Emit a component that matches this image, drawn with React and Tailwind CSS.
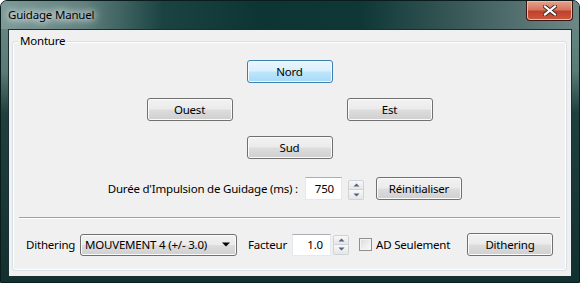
import React from 'react'

const btnBase =
  'h-[23px] w-[86px] flex items-center justify-center rounded-[3px] border text-black leading-none'
const btnNormal =
  'border-[#707070] bg-[linear-gradient(#f2f2f2_0%,#ebebeb_48%,#dddddd_52%,#cfcfcf_100%)] shadow-[inset_0_0_0_1px_#fbfbfb]'
const btnHot =
  'border-[#3c7fb1] bg-[linear-gradient(#eaf6fd_0%,#d9f0fc_48%,#bee6fd_52%,#a7d9f5_100%)] shadow-[inset_0_0_0_1px_#f4fbff]'

const Button = ({ label, hot, className = '' }) => (
  <div className={`${btnBase} ${hot ? btnHot : btnNormal} ${className}`}>{label}</div>
)

const Arrow = ({ up }) => (
  <svg width="7" height="4" viewBox="0 0 7 4">
    <path d={up ? 'M0.5 3.5 L3.5 0.5 L6.5 3.5 Z' : 'M0.5 0.5 L3.5 3.5 L6.5 0.5 Z'} fill="#4d6185" />
  </svg>
)

const Spinner = ({ className = '' }) => (
  <div className={`flex flex-col w-[16px] ${className}`}>
    <div className="h-[10px] flex items-center justify-center border border-[#cfd3d8] rounded-t-[2px] bg-[linear-gradient(#f8f8f8,#e6e6e6)]">
      <Arrow up />
    </div>
    <div className="h-[10px] flex items-center justify-center border border-t-0 border-[#cfd3d8] rounded-b-[2px] bg-[linear-gradient(#f8f8f8,#e6e6e6)]">
      <Arrow />
    </div>
  </div>
)

const NumInput = ({ value, className = '' }) => (
  <div
    className={`bg-white border border-[#e3e9ef] border-t-[#abadb3] flex items-center justify-end ${className}`}
  >
    {value}
  </div>
)

export default function App() {
  return (
    <div className="w-[580px] h-[283px] flex flex-col rounded-t-[7px] border border-[#0b1c1c] overflow-hidden font-['Noto_Sans',sans-serif] text-[11.5px] tracking-[-0.2px] text-black bg-[linear-gradient(180deg,#6c8b89_0%,#5a7a78_25%,#1f3f3e_40%,#123030_100%)]">
      {/* Title bar */}
      <div className="h-[28px] flex items-start justify-between bg-[linear-gradient(90deg,#7b9a98_0%,#62827f_14%,#1a4342_28%,#0c3534_45%,#0e3736_62%,#3b5b5a_80%,#6e8887_100%)]">
        <div className="pl-[7px] pt-[8px] leading-none [text-shadow:0_0_6px_#fff,0_0_10px_#fff,0_0_16px_#ffffffaa]">
          Guidage Manuel
        </div>
        <div className="mr-[6px] w-[47px] h-[20px] rounded-b-[4px] border border-t-0 border-[#3a1712] flex items-center justify-center bg-[linear-gradient(#e6a38f_0%,#d5765f_45%,#c0402b_55%,#cb5a40_100%)] shadow-[inset_0_0_0_1px_#f0b8a8]">
          <svg width="14" height="11" viewBox="0 0 14 11">
            <path d="M2 1.5 L12 9.5 M12 1.5 L2 9.5" stroke="#3a2a2a" strokeWidth="4" strokeLinecap="square" />
            <path d="M2 1.5 L12 9.5 M12 1.5 L2 9.5" stroke="#ffffff" strokeWidth="2.2" strokeLinecap="square" />
          </svg>
        </div>
      </div>

      {/* Client */}
      <div className="mx-[7px] mb-[5px] h-[248px] border border-[#1a3030] bg-[#f0f0f0] flex flex-col">
        <div className="mt-[11px] ml-[3px] mr-[4px] mb-[5px] flex-1 relative rounded-[3px] border border-[#d5dfe5] shadow-[inset_0_0_0_1px_#ffffff] flex flex-col items-center">
          <span className="absolute left-[5px] -top-[9px] px-[2px] bg-[#f0f0f0] leading-[16px]">Monture</span>

          <Button label="Nord" hot className="mt-[18px]" />
          <div className="mt-[15px] flex gap-[114px]">
            <Button label="Ouest" />
            <Button label="Est" />
          </div>
          <Button label="Sud" className="mt-[15px]" />

          <div className="mt-[18px] self-stretch flex items-start pl-[94px]">
            <div className="w-[191px] h-[24px] flex items-center justify-end whitespace-nowrap">
              Durée d'Impulsion de Guidage (ms) :
            </div>
            <NumInput value="750" className="ml-[7px] w-[37px] h-[23px] pr-[7px]" />
            <Spinner className="ml-[6px] mt-[3px]" />
            <Button label="Réinitialiser" className="ml-[12px]" />
          </div>

          <div className="mt-[16px] self-stretch mx-[6px] h-[2px] border-t border-[#a0a0a0] border-b border-b-white" />

          <div className="mt-[14px] self-stretch flex items-center h-[23px] pl-[13px]">
            <div className="w-[54px] whitespace-nowrap">Dithering</div>
            <div className="w-[157px] h-[22px] flex items-center justify-between pl-[4px] pr-[6px] rounded-[3px] border border-[#707070] bg-[linear-gradient(#f2f2f2_0%,#ebebeb_48%,#dddddd_52%,#cfcfcf_100%)] shadow-[inset_0_0_0_1px_#fbfbfb] whitespace-nowrap">
              <span>MOUVEMENT 4 (+/- 3.0)</span>
              <svg width="8" height="5" viewBox="0 0 8 5">
                <path d="M0 0.5 L8 0.5 L4 4.5 Z" fill="#000" />
              </svg>
            </div>
            <div className="w-[55px] pl-[11px] whitespace-nowrap">Facteur</div>
            <NumInput value="1.0" className="w-[39px] h-[22px] pr-[7px]" />
            <Spinner className="ml-[2px]" />
            <div className="ml-[10px] w-[13px] h-[13px] border border-[#8e8f8f] bg-[linear-gradient(135deg,#dcdcdc,#fbfbfb)] shadow-[inset_0_0_0_1px_#f4f4f4]" />
            <div className="w-[95px] pl-[4px] whitespace-nowrap">AD Seulement</div>
            <Button label="Dithering" />
          </div>
        </div>
      </div>
    </div>
  )
}
